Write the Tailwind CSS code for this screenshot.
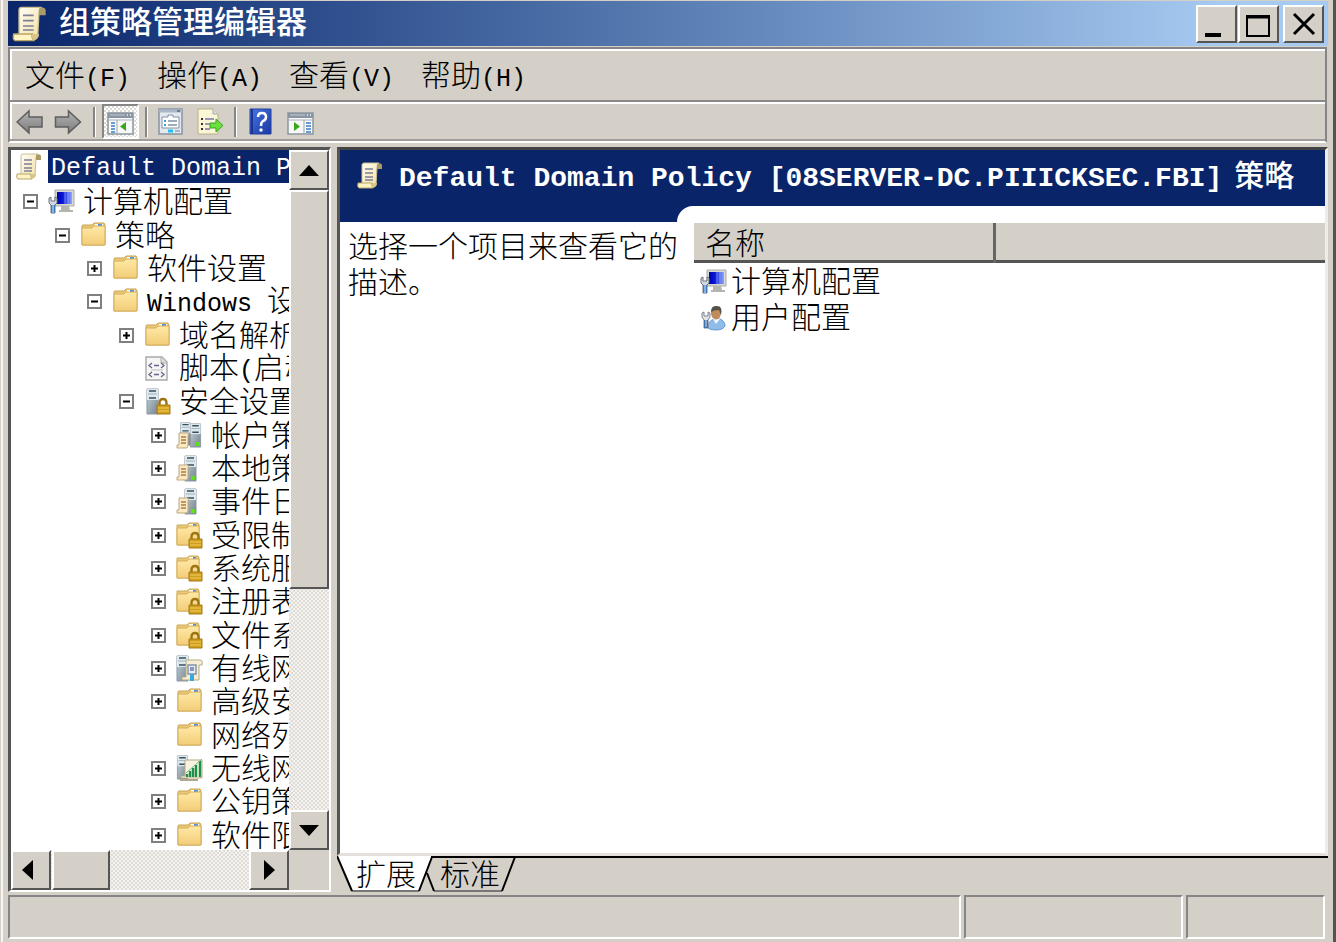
<!DOCTYPE html>
<html lang="zh-CN">
<head>
    <meta charset="UTF-8">
    <meta name="viewport" content="width=device-width, initial-scale=1.0">
    <title>组策略管理编辑器</title>
    <script src="https://cdn.jsdelivr.net/npm/@tailwindcss/browser@4"></script>
</head>
<body class="bg-[#d4d0c8] text-black text-[30px] leading-[33px] font-light font-['Noto_Sans_CJK_SC',sans-serif] overflow-hidden">

    <!-- icon sprites -->
    <svg class="absolute w-0 h-0" xmlns="http://www.w3.org/2000/svg">
        <defs>
            <linearGradient id="paper" x1="0" y1="0" x2="1" y2="1"><stop offset="0" stop-color="#fffef6"/><stop offset="1" stop-color="#f3dfa0"/></linearGradient>
            <linearGradient id="fold" x1="0" y1="0" x2="0" y2="1"><stop offset="0" stop-color="#ffe9a6"/><stop offset="1" stop-color="#f2cd78"/></linearGradient>
            <linearGradient id="steel" x1="0" y1="0" x2="1" y2="1"><stop offset="0" stop-color="#c9d5dc"/><stop offset="1" stop-color="#73838e"/></linearGradient>
            <linearGradient id="screen" x1="0" y1="0" x2="1" y2="0"><stop offset="0" stop-color="#0000a8"/><stop offset=".4" stop-color="#0a18d8"/><stop offset="1" stop-color="#8fa8ff"/></linearGradient>
            <linearGradient id="gray" x1="0" y1="0" x2="0" y2="1"><stop offset="0" stop-color="#b4b4b4"/><stop offset="1" stop-color="#7c7c7c"/></linearGradient>
            <linearGradient id="blue" x1="0" y1="0" x2="1" y2="1"><stop offset="0" stop-color="#4a78e0"/><stop offset="1" stop-color="#1a36a4"/></linearGradient>
        </defs>
        <symbol id="scroll" viewBox="0 0 27 27">
            <path d="M6 3q0-2 2-2h15q-2 1-2 4l-1 18H6z" fill="url(#paper)" stroke="#c9bd94"/>
            <path d="M21 2q4-2 5 1v4h-5z" fill="#a99c68"/>
            <path d="M2 21h14q-1 2 1 5H3q-2-1-1-5z" fill="#fff3c4" stroke="#b9a566"/>
            <path d="M16 21h5q0 4-4 5-2-2-1-5z" fill="#d9c48a"/>
            <path d="M9 7h8M9 11h8M9 15h8M9 18h8" stroke="#7d7f99" stroke-width="1.3"/>
        </symbol>
        <symbol id="computer" viewBox="0 0 27 27">
            <path d="M7 2h19v16H7z" fill="#d8d8d2" stroke="#aaa"/>
            <path d="M9 4h15v12H9z" fill="url(#screen)"/>
            <path d="M17 4v12M20 4v12" stroke="#b6c4ff" stroke-opacity=".5"/>
            <path d="M13 18h8l1 4h3v2H11v-2h2z" fill="#b5b5af"/>
            <path d="M1 10v5l2 2v8h4v-8l2-2v-5L7 9v4H3V9z" fill="#d2d8de" stroke="#6c7580"/>
            <path d="M3 17h4v8H3z" fill="#3f7bc0"/><path d="M5 17v8" stroke="#d6e8fa"/>
        </symbol>
        <symbol id="user" viewBox="0 0 27 27">
            <path d="M8 24q0-8 7-9h5q5 2 5 7-2 4-9 4-6 0-8-2z" fill="#8fbce8" stroke="#6a9bd0"/>
            <path d="M13 15l3 5 4-5z" fill="#eef6ff"/>
            <ellipse cx="16" cy="9" rx="5" ry="6.5" fill="#c08a5a"/>
            <path d="M11 8q0-7 6-6 6 0 4 9l-2-5q-5 0-8 2z" fill="#55504a"/>
            <path d="M2 9v4l2 3v8h4v-8l2-3V9L8 8v4H4V8z" fill="#e2e6ea" stroke="#7a838c"/>
            <path d="M4 16h4v8H4z" fill="#3f6faa"/><path d="M6 16v7" stroke="#cfe2f6"/>
        </symbol>
        <symbol id="folder" viewBox="0 0 27 27">
            <path d="M2 4q0-1 1-1h9l2-2h10l1 2v20H2z" fill="#e9c877" stroke="#c9a353"/>
            <path d="M15 2h8v2h-8z" fill="#fff"/><path d="M18 3h4" stroke="#4b93e0" stroke-width="2"/>
            <path d="M2 6h10l2-2h11v18q0 1-1 1H2z" fill="url(#fold)" stroke="#d5ae5c"/>
        </symbol>
        <symbol id="lock" viewBox="0 0 27 27">
            <path d="M15.500 18v-3q0-4 3.500-4t3.500 4v3" fill="none" stroke="#9c7413" stroke-width="2.400"/>
            <path d="M13 17h13v9H13z" fill="#cf9d1f" stroke="#a87a10"/><path d="M14 20h11M14 23h11" stroke="#f2cf5c"/>
        </symbol>
        <symbol id="folderlock" viewBox="0 0 27 27">
            <path d="M1 3h10l2-2h9l1 2v20H1z" fill="#e9c877" stroke="#cda85a"/>
            <path d="M13 2h7v2h-7z" fill="#fff"/><path d="M17 3h3" stroke="#4b93e0" stroke-width="2"/>
            <path d="M1 6h10l2-2h10v19H1z" fill="url(#fold)" stroke="#d5ae5c"/>
            <use href="#lock"/>
        </symbol>
        <symbol id="tower" viewBox="0 0 13 27">
            <path d="M1 1h11v25H1z" fill="url(#steel)" stroke="#8998a2"/>
            <path d="M1 1h11v11H1z" fill="#dfe8ec"/><path d="M3 3h7M3 10h7" stroke="#35525f" stroke-width="1.500"/><path d="M2 6h9" stroke="#9db4c0"/>
        </symbol>
        <symbol id="serverlock" viewBox="0 0 27 27"><use href="#tower" x="2" y="0" width="13" height="27"/><use href="#lock"/></symbol>
        <symbol id="sheet" viewBox="0 0 14 17">
            <path d="M3 1h9q1 1 0 3v10q0 2-2 2H1v-3h2z" fill="#fbe9c4" stroke="#bda77c"/>
            <path d="M5 5h5M5 8h5M5 11h5" stroke="#a67d4c" stroke-width="1.300"/>
        </symbol>
        <symbol id="servers" viewBox="0 0 27 27">
            <use href="#tower" x="3" y="0" width="13" height="24"/><use href="#tower" x="13" y="1" width="13" height="25"/>
            <path d="M20 20h4v4h-4z" fill="#62dc1e"/><use href="#sheet" x="0" y="10" width="14" height="17"/>
        </symbol>
        <symbol id="server" viewBox="0 0 27 27">
            <use href="#tower" x="8" y="0" width="13" height="27"/><path d="M15 21h4v4h-4z" fill="#62dc1e"/>
            <use href="#sheet" x="0" y="9" width="14" height="17"/>
        </symbol>
        <symbol id="script" viewBox="0 0 27 27">
            <path d="M2 2h16l5 5v18H2z" fill="#f6f6f6" stroke="#a9a9a9" stroke-width="1.400"/><path d="M17 2v6h6" fill="#ddd" stroke="#aaa"/>
            <path d="M7 15h12" stroke="#bbb"/>
            <path d="M8 8l-3 2.500 3 2.500M17 8l3 2.500-3 2.500M10 10.500h5M8 17l-3 2.500 3 2.500M17 17l3 2.500-3 2.500M10 19.500h5" fill="none" stroke="#66668c" stroke-width="1.300"/>
        </symbol>
        <symbol id="wired" viewBox="0 0 27 27">
            <use href="#tower" x="0" y="0" width="13" height="27"/>
            <path d="M10 5h14q3 0 2 5h-3v15H6v-3h4z" fill="#f6eed4" stroke="#b7a983"/>
            <path d="M12 10h8v9h-8z" fill="#e8edf4" stroke="#8291a8" stroke-width="1.400"/><path d="M14 12h4v4h-4z" fill="#8795c4"/><path d="M16 19v7" stroke="#39a8de" stroke-width="4"/>
        </symbol>
        <symbol id="wireless" viewBox="0 0 27 27">
            <use href="#tower" x="0" y="0" width="13" height="25"/>
            <path d="M9 5h17v18H5v-2h4z" fill="#f7f2df" stroke="#b7a983"/>
            <path d="M4 25h18" stroke="#b0a88e" stroke-width="2"/>
            <path d="M11 22v-3M14 22v-6M17 22v-9M20 22V10M24 22V6" stroke="#1c8f48" stroke-width="2.400"/><path d="M10 18L26 4" stroke="#6abf87"/>
        </symbol>
        <symbol id="window" viewBox="0 0 27 23">
            <path d="M1 1h25v21H1z" fill="#f8f8f8" stroke="#8b95a0" stroke-width="1.500"/>
            <path d="M1 1h25v5H1z" fill="#8995a3"/><path d="M3 3h15" stroke="#c4ccd4"/><path d="M20 3h1M23 3h1" stroke="#fff" stroke-width="1.500"/><path d="M1 8h25" stroke="#aab2bb"/>
        </symbol>
    </svg>

    <div class="h-screen flex flex-col pl-2 pr-[5px] border-r-[3px] border-[#55534f] shadow-[inset_1px_0_#d4d0c8,inset_3px_0_#f7f6f4]">

        <header class="mt-px h-[45px] shrink-0 flex items-center pl-[3px] pr-1 bg-linear-to-r from-[#0a246a] to-[#a6caf0] to-92%">
            <svg class="w-9 h-[38px]"><use href="#scroll"/></svg>
            <h1 class="flex-1 pl-3 pb-2 text-white text-[31px] font-medium whitespace-nowrap">组策略管理编辑器</h1>
            <button aria-label="最小化" class="w-[41px] h-[38px] bg-[#d4d0c8] border-2 border-t-white border-l-white border-r-[#555] border-b-[#555]">
                <svg class="w-full h-full" viewBox="0 0 37 34"><path d="M7 28h16" stroke="#000" stroke-width="4"/></svg>
            </button>
            <button aria-label="最大化" class="ml-px w-[41px] h-[38px] bg-[#d4d0c8] border-2 border-t-white border-l-white border-r-[#555] border-b-[#555]">
                <svg class="w-full h-full" viewBox="0 0 37 34"><path d="M7 9h22v20H7z" fill="none" stroke="#000" stroke-width="2"/><path d="M6 10h24" stroke="#000" stroke-width="3"/></svg>
            </button>
            <button aria-label="关闭" class="ml-1 w-[41px] h-[38px] bg-[#d4d0c8] border-2 border-t-white border-l-white border-r-[#555] border-b-[#555]">
                <svg class="w-full h-full" viewBox="0 0 37 34"><path d="M9 7l20 20M29 7L9 27" stroke="#000" stroke-width="3"/></svg>
            </button>
        </header>

        <div class="mt-px mr-px shrink-0 border-2 border-[#858585] border-b-white shadow-[inset_2px_2px_#fff]">
            <nav class="h-[53px] flex items-center gap-[27px] pl-[15px] border-b-2 border-[#8a8987]">
                <button>文件<span class="font-['Liberation_Mono',monospace] text-[25px] leading-none">(F)</span></button>
                <button>操作<span class="font-['Liberation_Mono',monospace] text-[25px] leading-none">(A)</span></button>
                <button>查看<span class="font-['Liberation_Mono',monospace] text-[25px] leading-none">(V)</span></button>
                <button>帮助<span class="font-['Liberation_Mono',monospace] text-[25px] leading-none">(H)</span></button>
            </nav>
            <div class="h-[39px] flex items-center pl-[6px] border-t-2 border-t-white border-b-2 border-b-[#a09e9a]">
                <button aria-label="后退"><svg class="w-[27px] h-[26px]" viewBox="0 0 27 26"><path d="M1 13L13 2v6h13v10H13v6z" fill="url(#gray)" stroke="#5d5d5d" stroke-width="1.500"/></svg></button>
                <button aria-label="前进" class="ml-[11px]"><svg class="w-7 h-[26px]" viewBox="0 0 27 26"><path d="M26 13L14 2v6H1v10h13v6z" fill="url(#gray)" stroke="#5d5d5d" stroke-width="1.500"/></svg></button>
                <i class="ml-[11px] w-[3px] h-[30px] bg-white border-l-2 border-[#858585]"></i>
                <button aria-label="显示/隐藏控制台树" class="ml-[6px] w-[37px] h-[35px] flex items-center justify-center pt-1 border-2 border-t-[#858585] border-l-[#858585] border-r-white border-b-white bg-[repeating-conic-gradient(#fff_0_25%,#dedbd5_0_50%)] bg-[length:4px_4px]">
                    <svg class="w-[27px] h-[23px]" viewBox="0 0 27 23"><use href="#window"/><path d="M10 8v14" stroke="#9aa3ad"/><path d="M4 11h4M4 14h4M4 17h4M4 20h4" stroke="#3b7cc4" stroke-width="1.500"/><path d="M19 10v9l-6-4.500z" fill="#35a81c"/></svg>
                </button>
                <i class="ml-[6px] w-[3px] h-[30px] bg-white border-l-2 border-[#858585]"></i>
                <button aria-label="属性" class="ml-[9px]"><svg class="w-[27px] h-[27px]" viewBox="0 0 27 27">
                    <path d="M2 1h23v25H2z" fill="#e3e9ef" stroke="#8792a0" stroke-width="1.500"/><path d="M2 3h23" stroke="#aab7c6" stroke-width="3"/><path d="M20 3h3" stroke="#53677e" stroke-width="1.500"/>
                    <path d="M5 9h6V7h5v2h6v11H5z" fill="#fff" stroke="#8291a3"/><path d="M7 13h2M7 17h2" stroke="#3ca1dd" stroke-width="2"/><path d="M11 13h9M11 17h9" stroke="#8090a0" stroke-width="1.500"/><path d="M11 23h5" stroke="#21c1ee" stroke-width="3"/><path d="M18 23h5" stroke="#a7b3c0" stroke-width="2"/>
                </svg></button>
                <button aria-label="导出列表" class="ml-[11px]"><svg class="w-[30px] h-[27px]" viewBox="0 0 30 27">
                    <path d="M3 1h15l5 5v20H3z" fill="#fbf6d8" stroke="#b9ae88"/><path d="M18 1v5h5" fill="#ddd" stroke="#aaa"/>
                    <path d="M6 11h2M6 16h2M6 21h2" stroke="#333" stroke-width="2"/><path d="M10 11h9M10 16h5M10 21h5" stroke="#7a78a8" stroke-width="1.500"/>
                    <path d="M15 15h6v-4l7 6.500-7 6.500v-4h-6z" fill="#6be03e" stroke="#36a51c"/>
                </svg></button>
                <i class="ml-[9px] w-[3px] h-[30px] bg-white border-l-2 border-[#858585]"></i>
                <button aria-label="帮助" class="ml-[11px]"><svg class="w-[25px] h-[27px]" viewBox="0 0 25 27">
                    <path d="M2 1h21v25H2z" fill="url(#blue)" stroke="#2341a0"/><path d="M4 1v25" stroke="#1b3590" stroke-width="2"/>
                    <path d="M10 9q0-4 4-4t4 4q0 3-3 4-2 1-2 5" fill="none" stroke="#fff" stroke-width="2.500"/><circle cx="13" cy="22" r="1.700" fill="#fff"/>
                </svg></button>
                <button aria-label="显示/隐藏操作窗格" class="ml-[14px] pt-1">
                    <svg class="w-[27px] h-[23px]" viewBox="0 0 27 23"><use href="#window"/><path d="M17 8v14" stroke="#9aa3ad"/><path d="M19 11h5M19 14h5M19 17h5M19 20h5" stroke="#3b7cc4" stroke-width="1.500"/><path d="M7 10v9l6-4.500z" fill="#35a81c"/></svg>
                </button>
            </div>
        </div>

        <main class="mt-1 flex-1 min-h-0 flex gap-[6px]">
            <!-- console tree -->
            <section class="w-[323px] shrink-0 grid grid-cols-[1fr_40px] grid-rows-[1fr_40px] bg-[#d4d0c8] border-t-3 border-l-3 border-t-[#555] border-l-[#555] border-r-2 border-b-2 border-r-white border-b-white">
                <div class="min-h-0 overflow-hidden bg-white">
                    <ul id="tree" class="h-[700px] flex flex-col whitespace-nowrap"></ul>
                </div>
                <div class="min-h-0 flex flex-col bg-[repeating-conic-gradient(#f4f3f1_0_25%,#dfdcd6_0_50%)] bg-[length:4px_4px]">
                    <button aria-label="向上滚动" class="h-10 shrink-0 flex items-center justify-center bg-[#d4d0c8] border-2 border-t-white border-l-white border-r-[#555] border-b-[#555]"><svg class="w-5 h-[11px]" viewBox="0 0 20 11"><path d="M10 0l10 11H0z"/></svg></button>
                    <div class="h-[57%] bg-[#d4d0c8] border-2 border-t-white border-l-white border-r-[#555] border-b-[#555]"></div>
                    <button aria-label="向下滚动" class="mt-auto h-10 shrink-0 flex items-center justify-center bg-[#d4d0c8] border-2 border-t-white border-l-white border-r-[#555] border-b-[#555]"><svg class="w-5 h-[11px]" viewBox="0 0 20 11"><path d="M0 0h20L10 11z"/></svg></button>
                </div>
                <div class="flex bg-[repeating-conic-gradient(#f4f3f1_0_25%,#dfdcd6_0_50%)] bg-[length:4px_4px]">
                    <button aria-label="向左滚动" class="w-10 pr-2 flex items-center justify-center bg-[#d4d0c8] border-2 border-t-white border-l-white border-r-[#555] border-b-[#555]"><svg class="w-[11px] h-5" viewBox="0 0 11 20"><path d="M11 0v20L0 10z"/></svg></button>
                    <div class="ml-px w-[58px] bg-[#d4d0c8] border-2 border-t-white border-l-white border-r-[#555] border-b-[#555]"></div>
                    <button aria-label="向右滚动" class="ml-auto w-10 flex items-center justify-center bg-[#d4d0c8] border-2 border-t-white border-l-white border-r-[#555] border-b-[#555]"><svg class="w-[11px] h-5" viewBox="0 0 11 20"><path d="M0 0v20l11-10z"/></svg></button>
                </div>
            </section>

            <!-- result pane -->
            <section class="flex-1 min-w-0 flex flex-col">
                <div class="flex-1 flex flex-col bg-white border-t-3 border-l-3 border-t-[#444] border-l-[#555] border-r-3 border-b-3 border-r-[#eeece8] border-b-[#e4e1dc]">
                    <div class="h-[56px] shrink-0 flex items-center pl-4 pb-[6px] bg-[#0a246a] text-white whitespace-nowrap overflow-hidden">
                        <svg class="w-[27px] h-[27px] shrink-0"><use href="#scroll"/></svg>
                        <h2 class="pl-4 text-[30px] font-medium"><span class="font-['Liberation_Mono',monospace] text-[28px] leading-none font-bold">Default Domain Policy [08SERVER-DC.PIIICKSEC.FBI]</span><span class="pl-3">策略</span></h2>
                    </div>
                    <div class="flex-1 flex">
                        <div class="w-[337px] shrink-0">
                            <div class="h-[16px] bg-[#0a246a]"></div>
                            <p class="-mr-2 pl-2 pt-1 leading-[36px]">选择一个项目来查看它的描述。</p>
                        </div>
                        <div class="flex-1 bg-[linear-gradient(#0a246a_16px,#fff_16px)]">
                            <div class="h-full bg-white rounded-tl-[16px] pl-[17px] pt-[17px]">
                                <table class="w-full border-collapse text-left">
                                    <thead>
                                        <tr class="h-[38px] bg-[#d4d0c8] border-b-3 border-[#555]">
                                            <th class="w-[300px] pl-[11px] font-light border-r-3 border-[#666]">名称</th>
                                            <th></th>
                                        </tr>
                                    </thead>
                                    <tbody>
                                        <tr class="h-9"><td colspan="2"><div class="flex items-center gap-1 pl-[6px]"><svg class="mt-1 w-[27px] h-[27px]"><use href="#computer"/></svg>计算机配置</div></td></tr>
                                        <tr class="h-9"><td colspan="2"><div class="flex items-center gap-1 pl-[6px]"><svg class="mt-1 w-[27px] h-[27px]"><use href="#user"/></svg>用户配置</div></td></tr>
                                    </tbody>
                                </table>
                            </div>
                        </div>
                    </div>
                </div>
                <div class="relative h-9 shrink-0 flex pl-[19px] gap-6 leading-[30px]">
                    <svg class="absolute left-0 top-0 w-[180px] h-9" viewBox="0 0 180 36" fill="none">
                        <path d="M0 0L15 35H82L95 0z" fill="#fff"/>
                        <path d="M15 35H82M97 35H165" stroke="#777" stroke-width="2"/>
                        <path d="M0 0L15 35M82 35L95 1M90 17L97 35M165 35L178 1" stroke="#000" stroke-width="2"/>
                    </svg>
                    <div class="absolute left-[94px] right-0 top-0 h-[2px] bg-black"></div>
                    <button class="relative pb-1">扩展</button>
                    <button class="relative pb-1">标准</button>
                </div>
            </section>
        </main>

        <footer class="mt-[3px] mb-[3px] mr-[3px] h-11 shrink-0 flex gap-[3px]">
            <div class="flex-1 border-2 border-t-[#858585] border-l-[#858585] border-r-white border-b-white"></div>
            <div class="w-[219px] border-2 border-t-[#858585] border-l-[#858585] border-r-white border-b-white"></div>
            <div class="w-[139px] border-2 border-t-[#858585] border-l-[#858585] border-r-white border-b-white"></div>
        </footer>
    </div>

    <script>
        const indents = ['', 'pl-[12px]', 'pl-[44px]', 'pl-[76px]', 'pl-[108px]', 'pl-[140px]'];

        const latin = text => `<span class="font-['Liberation_Mono',monospace] text-[25px] leading-none whitespace-pre">${text}</span>`;

        // level, expander, icon, label
        const rows = [
            [1, '-', 'computer', '计算机配置'],
            [2, '-', 'folder', '策略'],
            [3, '+', 'folder', '软件设置'],
            [3, '-', 'folder', latin('Windows ') + '设置'],
            [4, '+', 'folder', '域名解析策略'],
            [4, '', 'script', '脚本' + latin('(') + '启动' + latin('/') + '关机' + latin(')')],
            [4, '-', 'serverlock', '安全设置'],
            [5, '+', 'servers', '帐户策略'],
            [5, '+', 'server', '本地策略'],
            [5, '+', 'server', '事件日志'],
            [5, '+', 'folderlock', '受限制的组'],
            [5, '+', 'folderlock', '系统服务'],
            [5, '+', 'folderlock', '注册表'],
            [5, '+', 'folderlock', '文件系统'],
            [5, '+', 'wired', '有线网络'],
            [5, '+', 'folder', '高级安全'],
            [5, '', 'folder', '网络列表'],
            [5, '+', 'wireless', '无线网络'],
            [5, '+', 'folder', '公钥策略'],
            [5, '+', 'folder', '软件限制策略']
        ];

        function expander(sign) {
            if (!sign) return '<span class="w-[15px] shrink-0"></span>';
            const bar = sign === '+' ? 'M4 7.5h7M7.5 4v7' : 'M4 7.5h7';
            return `<button aria-label="${sign === '+' ? '展开' : '折叠'}" class="mt-1 w-[15px] h-[15px] shrink-0"><svg class="w-[15px] h-[15px]" viewBox="0 0 15 15"><path d="M1 1h13v13H1z" fill="#fff" stroke="#808080" stroke-width="2"/><path d="${bar}" stroke="#000" stroke-width="2"/></svg></button>`;
        }

        const tree = document.getElementById('tree');
        tree.innerHTML = `
            <li class="flex-1 min-h-0 flex items-center pl-1">
                <svg class="w-[27px] h-[27px] shrink-0"><use href="#scroll"/></svg>
                <span class="ml-[6px] h-[33px] flex-1 pl-[3px] bg-[#0a246a] text-white font-['Liberation_Mono',monospace] text-[25px] leading-[37px]">Default Domain Policy</span>
            </li>` + rows.map(([level, sign, icon, label]) => `
            <li class="flex-1 min-h-0 flex items-center ${indents[level]}">
                ${expander(sign)}
                <svg class="mt-1 ml-[10px] w-[27px] h-[27px] shrink-0"><use href="#${icon}"/></svg>
                <span class="ml-2">${label}</span>
            </li>`).join('');
    </script>
</body>
</html>
